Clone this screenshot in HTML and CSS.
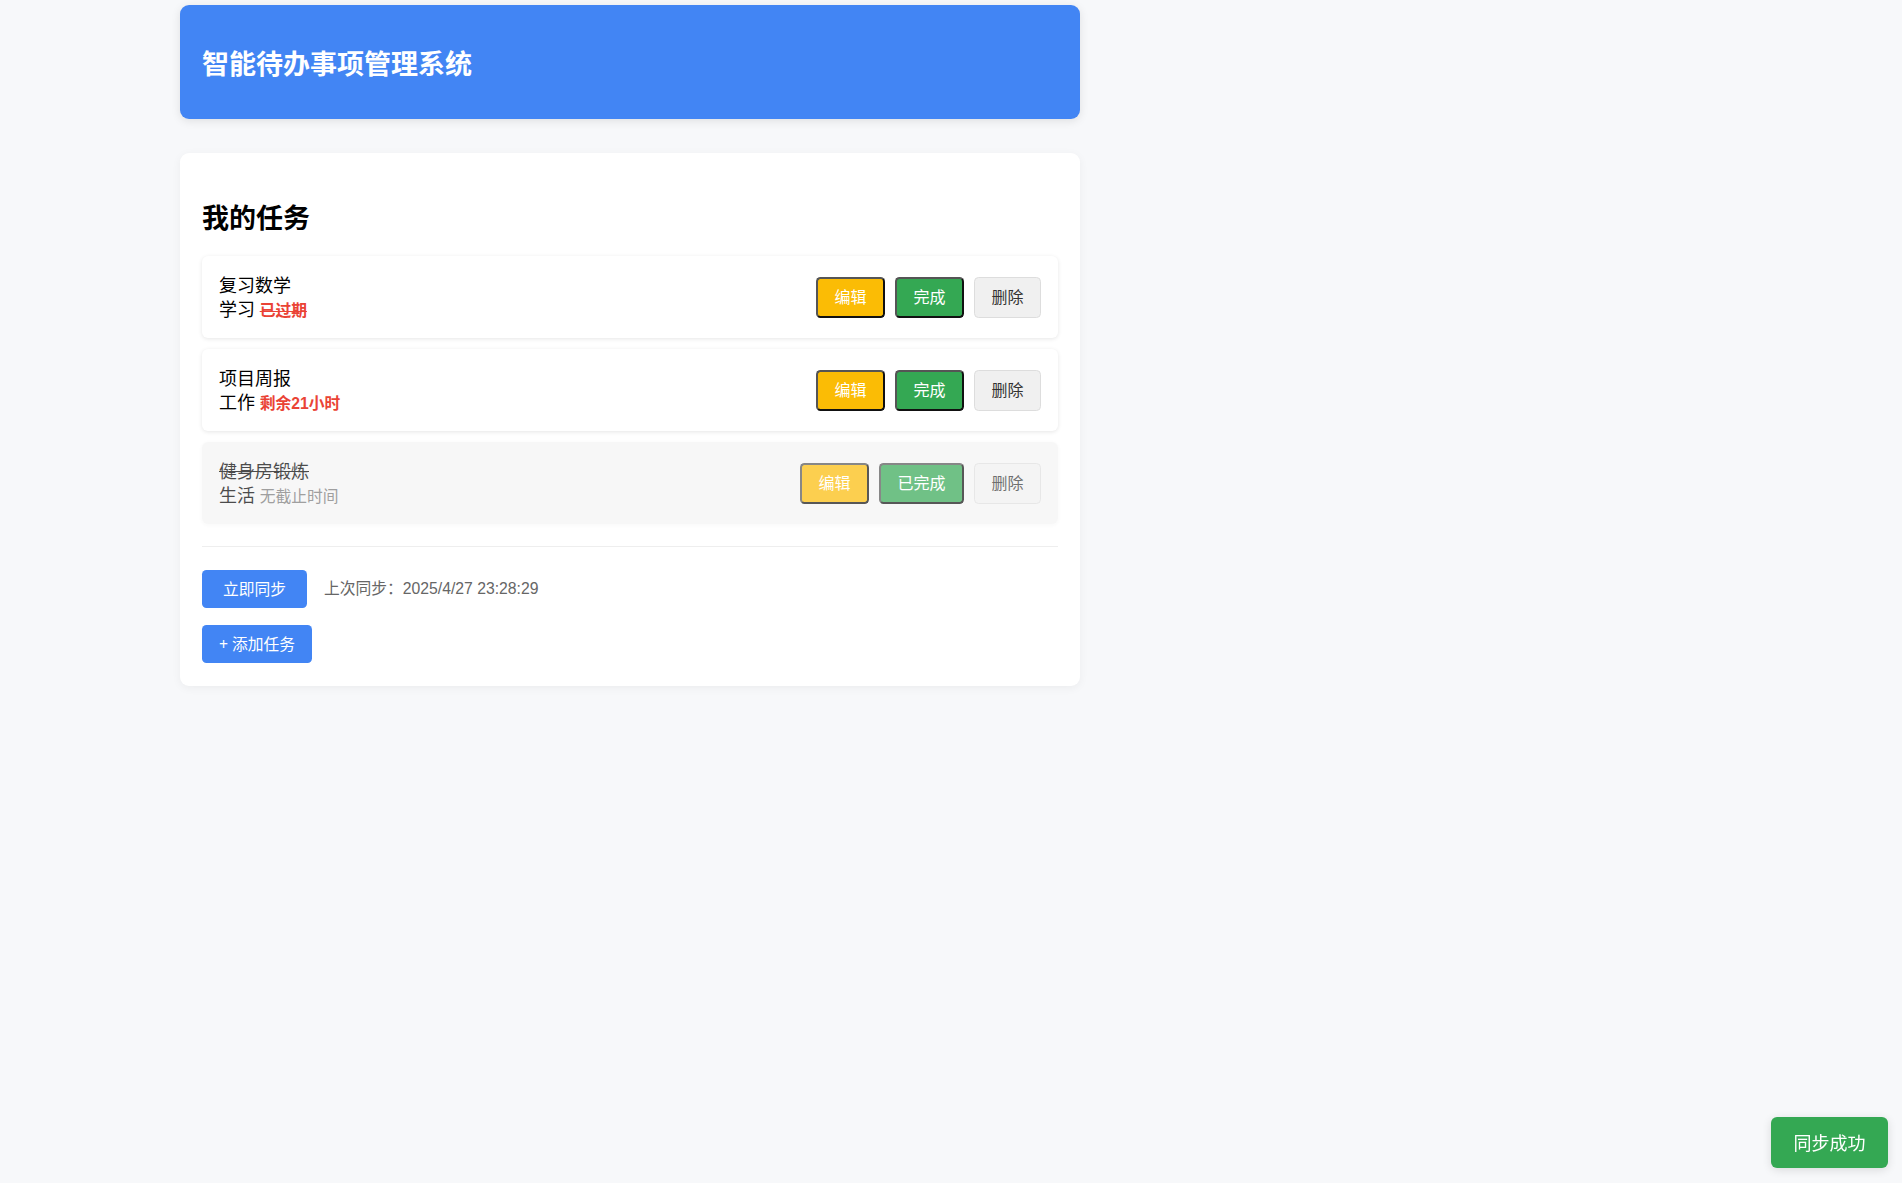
FILE: index.html
```html
<!DOCTYPE html>
<html lang="zh-CN">
<head>
<meta charset="utf-8">
<title>智能待办事项管理系统</title>
<link rel="stylesheet" href="styles.css">
</head>
<body>
<div class="app">
  <header class="app-header">
    <h1 class="app-title">智能待办事项管理系统</h1>
  </header>

  <section class="card">
    <h2 class="card-title">我的任务</h2>

    <ul class="task-list">
      <li class="task">
        <div class="task-info">
          <div class="task-name">复习数学</div>
          <div class="task-meta">学习 <span class="due due-overdue">已过期</span></div>
        </div>
        <div class="task-actions">
          <button class="btn btn-edit">编辑</button>
          <button class="btn btn-done">完成</button>
          <button class="btn btn-delete">删除</button>
        </div>
      </li>
      <li class="task">
        <div class="task-info">
          <div class="task-name">项目周报</div>
          <div class="task-meta">工作 <span class="due due-soon">剩余21小时</span></div>
        </div>
        <div class="task-actions">
          <button class="btn btn-edit">编辑</button>
          <button class="btn btn-done">完成</button>
          <button class="btn btn-delete">删除</button>
        </div>
      </li>
      <li class="task task-completed">
        <div class="task-info">
          <div class="task-name">健身房锻炼</div>
          <div class="task-meta">生活 <span class="due due-none">无截止时间</span></div>
        </div>
        <div class="task-actions">
          <button class="btn btn-edit">编辑</button>
          <button class="btn btn-done">已完成</button>
          <button class="btn btn-delete">删除</button>
        </div>
      </li>
    </ul>

    <div class="sync-bar">
      <div class="sync-row">
        <button class="btn-primary btn-sync">立即同步</button>
        <span class="sync-time">上次同步：2025/4/27 23:28:29</span>
      </div>
      <button class="btn-primary btn-add">+ 添加任务</button>
    </div>
  </section>
</div>

<div class="toast">同步成功</div>
</body>
</html>
```

FILE: styles.css
```css
html, body {
  margin: 0;
  padding: 0;
}

body {
  background: #f7f8fa;
  font-family: "Noto Sans", "Noto Sans CJK SC", sans-serif;
  color: #000;
  min-height: 1183px;
}

.app {
  width: 900px;
  margin: 5px 0 0 180px;
}

.app-header {
  background: #4285f4;
  border-radius: 9px;
  padding: 22px 22px;
  box-shadow: 0 2px 10px rgba(0, 0, 0, 0.1);
}

.app-title {
  margin: 18px 0 16px;
  font-family: "Noto Sans CJK SC", sans-serif;
  font-size: 27px;
  line-height: 36px;
  font-weight: 700;
  color: #fff;
}

.card {
  margin-top: 34px;
  background: #fff;
  border-radius: 9px;
  padding: 23px 22px 23px;
  box-shadow: 0 2px 10px rgba(0, 0, 0, 0.05);
}

.card-title {
  margin: 23px 0 21px;
  font-family: "Noto Sans CJK SC", sans-serif;
  font-size: 27px;
  line-height: 36px;
  font-weight: 700;
}

.task-list {
  list-style: none;
  margin: 0;
  padding: 0;
}

.task {
  display: flex;
  align-items: center;
  justify-content: space-between;
  background: #fff;
  border-radius: 6px;
  padding: 17px;
  margin-bottom: 11px;
  box-shadow: 0 1px 4px rgba(0, 0, 0, 0.1);
}

.task:last-child {
  margin-bottom: 0;
}

.task-completed {
  background: #f5f5f5;
  opacity: 0.7;
  box-shadow: 0 1px 4px rgba(0, 0, 0, 0.04);
}

.task-info {
  font-size: 18px;
  line-height: 24px;
}

.task-name,
.task-meta {
  height: 24px;
}

.task-completed .task-name {
  text-decoration: line-through;
}

.due {
  font-family: "Liberation Sans", "Noto Sans CJK SC", sans-serif;
  font-size: 15.75px;
  line-height: 16px;
}

.due-overdue {
  color: #ea4335;
  font-weight: 700;
  text-decoration: line-through;
}

.due-soon {
  color: #ea4335;
  font-weight: 700;
}

.due-none {
  color: #777;
}

.task-actions {
  display: flex;
  gap: 10px;
}

.btn {
  font-family: "Noto Sans", "Noto Sans CJK SC", sans-serif;
  font-size: 16px;
  line-height: 21px;
  padding: 8px 16.5px;
  border: 2px solid;
  border-color: #555 #111 #111 #555;
  border-radius: 4.5px;
  color: #fff;
  cursor: pointer;
}

.btn-edit {
  background: #fbbc05;
}

.btn-done {
  background: #34a853;
}

.btn-delete {
  background: #f0f0f0;
  color: #333;
  border: 1px solid #ddd;
  padding: 9px 16.5px;
}

.sync-bar {
  margin-top: 22px;
  border-top: 1px solid #eee;
  padding-top: 23px;
}

.sync-row {
  display: flex;
  align-items: center;
  gap: 17px;
}

.btn-primary {
  display: block;
  background: #4285f4;
  color: #fff;
  border: none;
  border-radius: 4.5px;
  font-family: "Noto Sans", "Noto Sans CJK SC", sans-serif;
  font-size: 15.75px;
  line-height: 20px;
  padding: 9px 21px;
  cursor: pointer;
}

.btn-add {
  margin-top: 17px;
  padding: 9px 17px;
}

.sync-time {
  font-family: "Liberation Sans", "Noto Sans CJK SC", sans-serif;
  font-size: 15.75px;
  line-height: 20px;
  color: #666;
}

.toast {
  position: fixed;
  right: 14px;
  bottom: 15px;
  background: #34a853;
  color: #fff;
  font-size: 18px;
  line-height: 24px;
  padding: 13.5px 22.5px;
  border-radius: 6px;
  box-shadow: 0 2px 10px rgba(0, 0, 0, 0.12);
}
```
